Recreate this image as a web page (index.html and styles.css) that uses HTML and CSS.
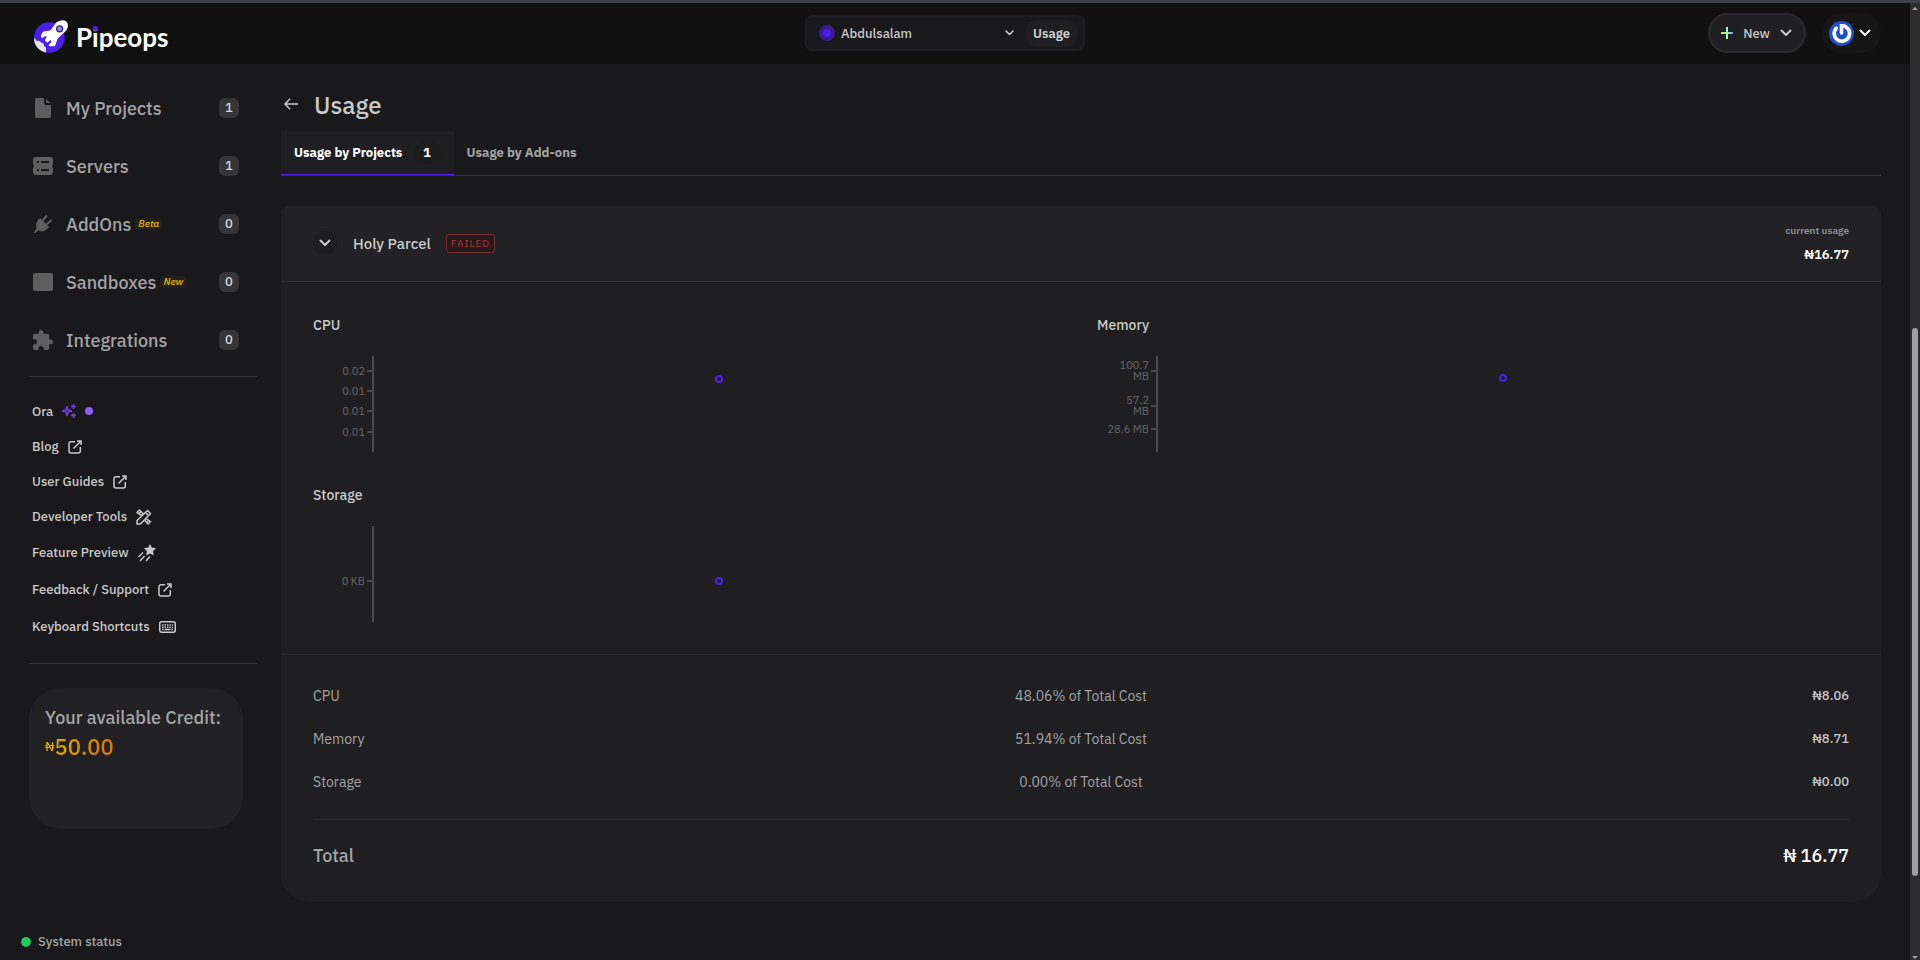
FILE: index.html
```html
<!DOCTYPE html>
<html lang="en">
<head>
  <meta charset="UTF-8" />
  <meta name="viewport" content="width=device-width, initial-scale=1.0"/>
  <title>Pipeops - Usage</title>
  <link rel="stylesheet" href="styles.css">
</head>
<body>
  <!-- Shared icons -->
  <svg class="sprite" aria-hidden="true">
    <symbol id="chevron" viewBox="0 0 12 8"><path d="M1.5 1.5 6 6l4.500-4.500" fill="none" stroke="currentColor" stroke-width="2" stroke-linecap="round" stroke-linejoin="round"/></symbol>
    <symbol id="external" viewBox="0 0 14 14"><path d="M7 1.700H3a2 2 0 0 0-2 2V11a2 2 0 0 0 2 2h7.300a2 2 0 0 0 2-2V7M5.500 8.500 12.500 1.500M9 1h4v4" fill="none" stroke="currentColor" stroke-width="1.500"/></symbol>
  </svg>

  <div class="page">
    <div class="app">
      <header class="top-bar">
        <a class="logo" href="#">
          <svg width="34" height="33" viewBox="0 0 102 98" aria-hidden="true">
            <circle cx="46" cy="52" r="46" fill="#4c1eea"/>
            <path d="M0 54c5 1 7 4 8 9 6-3 12 0 14 5 6-1 9 5 8 10 7 1 8 8 5 13l2 6C14 93 0 75 0 54z" fill="#e4e4ea"/>
            <path d="M66 8C74 1 88-2 96 3c8 6 7 20 1 28L72 54c-3 4-3 8-5 12l-4 12H46l-2-5 8-7-1-7-11 9-8-8 7-12-8 1-7 6-3-5c0-8 4-15 10-17l18-2z" fill="#fff"/>
            <circle cx="77" cy="26" r="9" fill="#9d84f5" stroke="#30256b" stroke-width="4"/>
          </svg>
          <span class="logo-text">P<span class="logo-i">i</span>peops</span>
        </a>

        <div class="workspace">
          <span class="workspace-dot"></span>
          <select class="workspace-select" aria-label="Workspace">
            <option>Abdulsalam</option>
          </select>
          <svg class="workspace-arrow" width="9" height="6" aria-hidden="true"><use href="#chevron"/></svg>
          <a class="workspace-page" href="#">Usage</a>
        </div>

        <div class="actions">
          <button class="new-btn" type="button">
            <svg width="12" height="12" viewBox="0 0 12 12" aria-hidden="true">
              <defs>
                <linearGradient id="plusGradient" x2="1"><stop offset="0" stop-color="#ffe600"/><stop offset=".5" stop-color="#7dffb0"/><stop offset="1" stop-color="#a78bfa"/></linearGradient>
              </defs>
              <path d="M0 5h12v2H0z" fill="url(#plusGradient)"/>
              <path d="M5 0h2v12H5z" fill="#9dffce"/>
            </svg>
            New
            <svg width="12" height="8" aria-hidden="true"><use href="#chevron"/></svg>
          </button>
          <button class="profile-btn" type="button" aria-label="Account">
            <svg width="25" height="25" viewBox="0 0 25 25" aria-hidden="true">
              <circle cx="12.500" cy="12.500" r="12.500" fill="#1e51c9"/>
              <path d="M7.300 7.200A7.700 7.700 0 1 0 12.500 4.800V12" fill="none" stroke="#fff" stroke-width="3.600" stroke-linecap="round"/>
            </svg>
            <svg width="12" height="8" aria-hidden="true"><use href="#chevron"/></svg>
          </button>
        </div>
      </header>

      <div class="layout">
        <aside class="sidebar">
          <nav class="menu">
            <a class="menu-item" href="#">
              <svg width="20" height="20" viewBox="0 0 20 20" aria-hidden="true"><path d="M4 0h7v4.500A2.500 2.500 0 0 0 13.500 7H18v11a2 2 0 0 1-2 2H4a2 2 0 0 1-2-2V2a2 2 0 0 1 2-2zm9 1 4.500 4H14a1 1 0 0 1-1-1z" fill="currentColor"/></svg>
              <span>My Projects</span>
              <span class="count">1</span>
            </a>
            <a class="menu-item" href="#">
              <svg width="20" height="20" viewBox="0 0 20 20" aria-hidden="true"><path d="M3 1h14a3 3 0 0 1 3 3v4l-1 2 1 2v4a3 3 0 0 1-3 3H3a3 3 0 0 1-3-3v-4l1-2-1-2V4a3 3 0 0 1 3-3z" fill="currentColor"/><path d="M4 6h2M8 6h8M4 14h2M8 14h8" stroke="#19191b" stroke-width="2"/></svg>
              <span>Servers</span>
              <span class="count">1</span>
            </a>
            <a class="menu-item" href="#">
              <svg width="20" height="20" viewBox="0 0 20 20" aria-hidden="true"><path d="m5 6 2-2 9 9-2 2c-3 3-7 3-10 .500C2.500 12 2.500 9 5 6z" fill="currentColor"/><path d="M2 18l3-3M10 6l3.500-4M14 10l4-3.500" stroke="currentColor" stroke-width="2" stroke-linecap="round"/></svg>
              <span>AddOns</span>
              <em class="tag">Beta</em>
              <span class="count">0</span>
            </a>
            <a class="menu-item" href="#">
              <svg width="20" height="20" viewBox="0 0 20 20" aria-hidden="true"><rect y="1" width="20" height="18" rx="2" fill="currentColor"/></svg>
              <span>Sandboxes</span>
              <em class="tag">New</em>
              <span class="count">0</span>
            </a>
            <a class="menu-item" href="#">
              <svg width="20" height="20" viewBox="2 1 21 21" aria-hidden="true"><path d="M20.500 11H19V7c0-1.100-.9-2-2-2h-4V3.500C13 2.120 11.880 1 10.500 1S8 2.120 8 3.500V5H4c-1.100 0-1.990.9-1.990 2v3.800H3.500c1.490 0 2.700 1.210 2.700 2.700s-1.210 2.700-2.700 2.700H2V20c0 1.100.9 2 2 2h3.800v-1.500c0-1.490 1.210-2.700 2.700-2.700s2.700 1.210 2.700 2.700V22H17c1.100 0 2-.9 2-2v-4h1.500a2.500 2.500 0 0 0 0-5z" fill="currentColor"/></svg>
              <span>Integrations</span>
              <span class="count">0</span>
            </a>
          </nav>

          <div class="links">
            <a class="link" href="#">Ora
              <svg class="ora" width="14" height="14" viewBox="0 0 14 14" aria-hidden="true"><path d="M5 2.500 6 6l3.500 1L6 8l-1 3.500L4 8 .500 7 4 6z" fill="none" stroke="currentColor" stroke-width="1.400" stroke-linejoin="round"/><path d="M11.500 0v5M9 2.500h5M11.500 9v5M9 11.500h5" stroke="currentColor" stroke-width="1.500"/></svg>
              <span class="ora-dot"></span>
            </a>
            <a class="link" href="#">Blog
              <svg width="14" height="14" aria-hidden="true"><use href="#external"/></svg>
            </a>
            <a class="link" href="#">User Guides
              <svg width="14" height="14" aria-hidden="true"><use href="#external"/></svg>
            </a>
            <a class="link" href="#">Developer Tools
              <svg width="16" height="16" viewBox="0 0 16 16" aria-hidden="true"><path d="M1 15v-3.500L11.500 1.500l3 3L4.500 15zM9.500 3.500l3 3M6 6.500 1 3.500 3.500 1l4 4M5 2.500 3.500 4M10 9.500l4.500 3-2.500 2.500-3.500-4M12.500 11.500 11 13" fill="none" stroke="currentColor" stroke-width="1.500" stroke-linejoin="round" stroke-linecap="round"/></svg>
            </a>
            <a class="link tall" href="#">Feature Preview
              <svg width="18" height="18" viewBox="0 0 18 18" aria-hidden="true"><path d="m12 0 1.700 3.600 4.300.6-3 3 .7 4.300-3.700-2-3.800 2 .7-4.300-3-3 4.300-.6z" fill="currentColor"/><path d="m5 8.500-4.500 4.500M6.500 12 2 17M12 12.500 8 17" stroke="currentColor" stroke-width="1.400"/></svg>
            </a>
            <a class="link tall" href="#">Feedback / Support
              <svg width="14" height="14" aria-hidden="true"><use href="#external"/></svg>
            </a>
            <a class="link tall" href="#">Keyboard Shortcuts
              <svg width="17" height="12" viewBox="0 0 17 12" aria-hidden="true"><rect x=".75" y=".75" width="15.500" height="10.500" rx="2" fill="none" stroke="currentColor" stroke-width="1.500"/><path d="M3 4h11M3 6.200h11" stroke="currentColor" stroke-width="1.400" stroke-dasharray="1.500 1"/><path d="M3 8.500h1.500M5.500 8.500h6M12.500 8.500H14" stroke="currentColor" stroke-width="1.300"/></svg>
            </a>
          </div>

          <div class="credit">
            <div>Your available Credit:</div>
            <div class="credit-amount"><span class="currency">₦</span>50.00</div>
          </div>

          <a class="status" href="#"><span class="status-dot"></span>System status</a>
        </aside>

        <main class="main">
          <div class="page-title">
            <a class="back" href="#" aria-label="Back">
              <svg width="14" height="12" viewBox="0 0 14 12" aria-hidden="true"><path d="M6 .800 1 6l5 5.200M1 6h13" fill="none" stroke="currentColor" stroke-width="1.500"/></svg>
            </a>
            <h1>Usage</h1>
          </div>

          <div class="tabs">
            <button class="tab active" type="button">Usage by Projects <span class="tab-count">1</span></button>
            <button class="tab" type="button">Usage by Add-ons</button>
          </div>

          <section class="project">
            <div class="project-head">
              <button class="toggle" type="button" aria-label="Toggle project">
                <svg width="12" height="8" aria-hidden="true"><use href="#chevron"/></svg>
              </button>
              <h2>Holy Parcel</h2>
              <span class="badge-failed">FAILED</span>
              <div class="current">
                <span class="current-label">current usage</span>
                <strong>₦16.77</strong>
              </div>
            </div>

            <div class="charts">
              <div class="chart-box">
                <h3>CPU</h3>
                <div class="chart">
                  <svg class="axis" width="60" height="96">
                    <path d="M60 0v96M54 15h6M54 35h6M54 55h6M54 76h6"/>
                    <text x="52" y="19">0.02</text>
                    <text x="52" y="39">0.01</text>
                    <text x="52" y="59">0.01</text>
                    <text x="52" y="80">0.01</text>
                  </svg>
                  <svg class="plot" height="96"><circle cx="50%" cy="23" r="3"/></svg>
                </div>
              </div>
              <div class="chart-box">
                <h3>Memory</h3>
                <div class="chart">
                  <svg class="axis" width="60" height="96">
                    <path d="M60 0v96M54 15h6M54 50h6M54 73h6"/>
                    <text x="52" y="13">100.7</text>
                    <text x="52" y="24">MB</text>
                    <text x="52" y="48">57.2</text>
                    <text x="52" y="59">MB</text>
                    <text x="52" y="77">28.6 MB</text>
                  </svg>
                  <svg class="plot" height="96"><circle cx="50%" cy="22" r="3"/></svg>
                </div>
              </div>
              <div class="chart-box">
                <h3>Storage</h3>
                <div class="chart">
                  <svg class="axis" width="60" height="96">
                    <path d="M60 0v96M54 55h6"/>
                    <text x="52" y="59">0 KB</text>
                  </svg>
                  <svg class="plot" height="96"><circle cx="50%" cy="55" r="3"/></svg>
                </div>
              </div>
            </div>

            <div class="costs">
              <table>
                <tbody>
                  <tr><td>CPU</td><td>48.06% of Total Cost</td><td>₦8.06</td></tr>
                  <tr><td>Memory</td><td>51.94% of Total Cost</td><td>₦8.71</td></tr>
                  <tr><td>Storage</td><td>0.00% of Total Cost</td><td>₦0.00</td></tr>
                </tbody>
              </table>
              <div class="total">
                <span>Total</span>
                <strong>₦ 16.77</strong>
              </div>
            </div>
          </section>
        </main>
      </div>
    </div>

    <div class="scrollbar" aria-hidden="true">
      <svg width="6" height="3" viewBox="0 0 6 3"><path d="M0 3 3 0l3 3z" fill="#a0a0a0"/></svg>
      <div class="scroll-before"></div>
      <div class="scroll-thumb"></div>
      <div class="scroll-after"></div>
      <svg width="6" height="3" viewBox="0 0 6 3"><path d="M0 0l3 3 3-3z" fill="#a0a0a0"/></svg>
    </div>
  </div>
</body>
</html>
```
FILE: styles.css
```css
* {
  box-sizing: border-box;
}
body {
  margin: 0;
  font-family: "IBM Plex Sans", Roboto, sans-serif;
  font-size: 13px;
  background: #19191b;
  color: #c9c9c9;
}
a {
  color: inherit;
  text-decoration: none;
}
button, select {
  font: inherit;
  color: inherit;
  border: none;
  background: none;
  cursor: pointer;
}
h1, h2, h3 {
  margin: 0;
  font-weight: 500;
}
svg {
  flex-shrink: 0;
}
.sprite {
  position: absolute;
  width: 0;
  height: 0;
}
.page {
  display: flex;
  min-height: 100vh;
  border-top: 3px solid #3e3f48;
}
.app {
  flex: 1;
  min-width: 0;
  display: flex;
  flex-direction: column;
}

/* Top bar */
.top-bar {
  display: grid;
  grid-template-columns: 1fr 280px 1fr;
  align-items: center;
  height: 61px;
  padding: 0 29px 1px 9px;
  background: #111;
}
.logo {
  display: flex;
  align-items: center;
  gap: 8px;
  margin-left: 25px;
  padding-top: 7px;
}
.logo-text {
  font: 700 26px/30px "Lato", sans-serif;
  color: #fff;
}
.logo-i {
  position: relative;
}
.logo-i::after {
  content: "";
  position: absolute;
  left: 1px;
  top: 5px;
  width: 5px;
  height: 5px;
  border-radius: 50%;
  background: #4c1eea;
}
.workspace {
  display: flex;
  align-items: center;
  height: 36px;
  padding: 0 5px 0 12px;
  border: 2px solid #1e1e20;
  border-radius: 8px;
  background: #19191b;
  font-weight: 500;
}
.workspace-dot {
  width: 16px;
  height: 16px;
  border: 4px solid #371c91;
  border-radius: 50%;
  background: #4c1eea;
}
.workspace-select {
  flex: 1;
  appearance: none;
  margin-left: 6px;
  padding: 0;
}
.workspace-arrow {
  margin-right: 11px;
}
.workspace-page {
  padding: 5px 8px;
  border-radius: 13px;
  background: #1f1f21;
  line-height: 17px;
  font-weight: 600;
  color: #d4d4d4;
}
.actions {
  display: flex;
  justify-content: flex-end;
  gap: 16px;
}
.new-btn, .profile-btn {
  display: flex;
  align-items: center;
  height: 40px;
  border-radius: 20px;
}
.new-btn {
  gap: 10px;
  padding: 0 12px 0 11px;
  border: 2px solid #2b2b2d;
  background: #202022;
  font-weight: 500;
}
.profile-btn {
  gap: 5px;
  padding: 0 10px 0 7px;
  background: #161617;
  color: #fff;
}

/* Sidebar */
.layout {
  display: flex;
  flex: 1;
}
.sidebar {
  display: flex;
  flex-direction: column;
  width: 281px;
  padding: 15px 24px 10px 21px;
}
.menu, .links, .credit {
  margin-left: 8px;
}
.menu {
  padding-bottom: 7px;
}
.menu-item {
  display: flex;
  align-items: center;
  height: 58px;
  padding: 0 18px 0 4px;
  font-size: 18px;
  font-weight: 500;
  color: #a3a3a3;
}
.menu-item svg {
  margin-right: 13px;
  color: #5e5e5e;
}
.count {
  width: 20px;
  margin-left: auto;
  border-radius: 6px;
  background: #353537;
  color: #d4d4d4;
  font-size: 13px;
  line-height: 20px;
  text-align: center;
}
.tag {
  margin-left: 4px;
  padding: 0 3px;
  border-radius: 4px;
  background: #212122;
  color: #d9a900;
  font-size: 10px;
  font-weight: 600;
  line-height: 12px;
}
.links {
  display: flex;
  flex-direction: column;
  padding: 16px 0 18px 3px;
  border: solid #303032;
  border-width: 1px 0;
}
.link {
  display: flex;
  align-items: center;
  gap: 9px;
  height: 35px;
  font-weight: 500;
}
.link.tall {
  height: 37px;
}
.link:first-child {
  height: 36px;
}
.ora {
  color: #7c3aed;
}
.ora-dot {
  width: 8px;
  height: 8px;
  border-radius: 50%;
  background: #8b5cf6;
}
.credit {
  min-height: 141px;
  margin-top: 24px;
  margin-right: 14px;
  padding: 17px 16px;
  border-radius: 32px;
  background: #212123;
  color: #a3a3a3;
  font-size: 18px;
  font-weight: 500;
  line-height: 26px;
}
.credit-amount {
  width: fit-content;
  margin-top: 2px;
  background: linear-gradient(90deg, #e0b000, #d97706);
  background-clip: text;
  color: transparent;
  font-size: 22px;
  line-height: 28px;
}
.currency {
  font-size: 13px;
  vertical-align: 4px;
}
.status {
  display: flex;
  align-items: center;
  gap: 7px;
  margin-top: auto;
  color: #a3a3a3;
  font-weight: 500;
}
.status-dot {
  width: 10px;
  height: 10px;
  border-radius: 50%;
  background: #22c55e;
}

/* Main */
.main {
  flex: 1;
  min-width: 0;
  padding: 25px 29px 0 0;
}
.page-title {
  display: flex;
  align-items: center;
  gap: 16px;
  padding: 0 3px;
}
.page-title h1 {
  font-size: 24px;
  line-height: 32px;
}
.tabs {
  display: flex;
  margin-top: 10px;
  border-bottom: 1px solid #353537;
}
.tab {
  height: 44px;
  padding: 0 13px;
  border-bottom: 1px solid transparent;
  color: #a3a3a3;
  font-weight: 700;
}
.tab.active {
  border-color: #4c1eea;
  background: #1f1f21;
  color: #fff;
}
.tab-count {
  display: inline-block;
  width: 27px;
  margin-left: 8px;
  border-radius: 11px;
  background: #1d1d1f;
  line-height: 22px;
  text-align: center;
}
.project {
  margin-top: 30px;
  border-radius: 8px 8px 28px 28px;
  background: #1f1f21;
  overflow: hidden;
}
.project-head {
  display: flex;
  align-items: center;
  height: 76px;
  padding: 0 32px 1px;
  border-bottom: 1px solid #303032;
  background: #222224;
}
.toggle {
  display: grid;
  place-items: center;
  width: 24px;
  height: 24px;
  padding: 0;
  border-radius: 50%;
  background: #1d1d1f;
}
.project-head h2 {
  margin: 0 15px 0 16px;
  font-size: 15px;
}
.badge-failed {
  padding: 0 4px;
  border: 1px solid #7c2b2d;
  border-radius: 3px;
  background: #241b1d;
  color: #b53131;
  font-size: 10px;
  letter-spacing: 1px;
  line-height: 17px;
}
.current {
  margin-left: auto;
  text-align: right;
}
.current-label {
  display: block;
  margin-bottom: 9px;
  color: #8f8f8f;
  font-size: 10px;
  font-weight: 600;
}
.current strong {
  color: #fff;
  font-weight: 600;
}
.charts {
  display: grid;
  grid-template-columns: 1fr 1fr;
  gap: 32px;
  padding: 32px;
}
.chart-box h3 {
  margin-bottom: 20px;
  font-size: 14px;
  line-height: 22px;
}
.chart {
  display: flex;
}
.axis {
  overflow: visible;
}
.axis path {
  fill: none;
  stroke: #4a4a4c;
  stroke-width: 2;
}
.axis text {
  fill: #666;
  font-size: 11px;
  text-anchor: end;
}
.plot {
  flex: 1;
  min-width: 0;
}
.plot circle {
  fill: none;
  stroke: #4c1eea;
  stroke-width: 2;
}
.costs {
  padding: 19px 32px 33px;
  border-top: 1px solid #29292b;
}
.costs table {
  width: 100%;
  table-layout: fixed;
  border-collapse: collapse;
  color: #a3a3a3;
  font-size: 14px;
}
.costs td {
  height: 43px;
  padding: 0;
}
.costs td:nth-child(2) {
  text-align: center;
}
.costs td:last-child {
  color: #c4c4c4;
  font-size: 13px;
  font-weight: 500;
  text-align: right;
}
.total {
  display: flex;
  justify-content: space-between;
  margin-top: 16px;
  padding-top: 23px;
  border-top: 1px solid #29292b;
  color: #a3a3a3;
  font-size: 18px;
  font-weight: 500;
  line-height: 26px;
}
.total strong {
  color: #fff;
  font-weight: 500;
}

/* Scrollbar */
.scrollbar {
  display: flex;
  flex-direction: column;
  align-items: center;
  width: 10px;
  padding: 4px 0 1px;
  background: #2c2c2c;
}
.scroll-before {
  flex: 318;
}
.scroll-thumb {
  flex: 549;
  width: 6px;
  border-radius: 3px;
  background: #9f9f9f;
}
.scroll-after {
  flex: 80;
}
```
